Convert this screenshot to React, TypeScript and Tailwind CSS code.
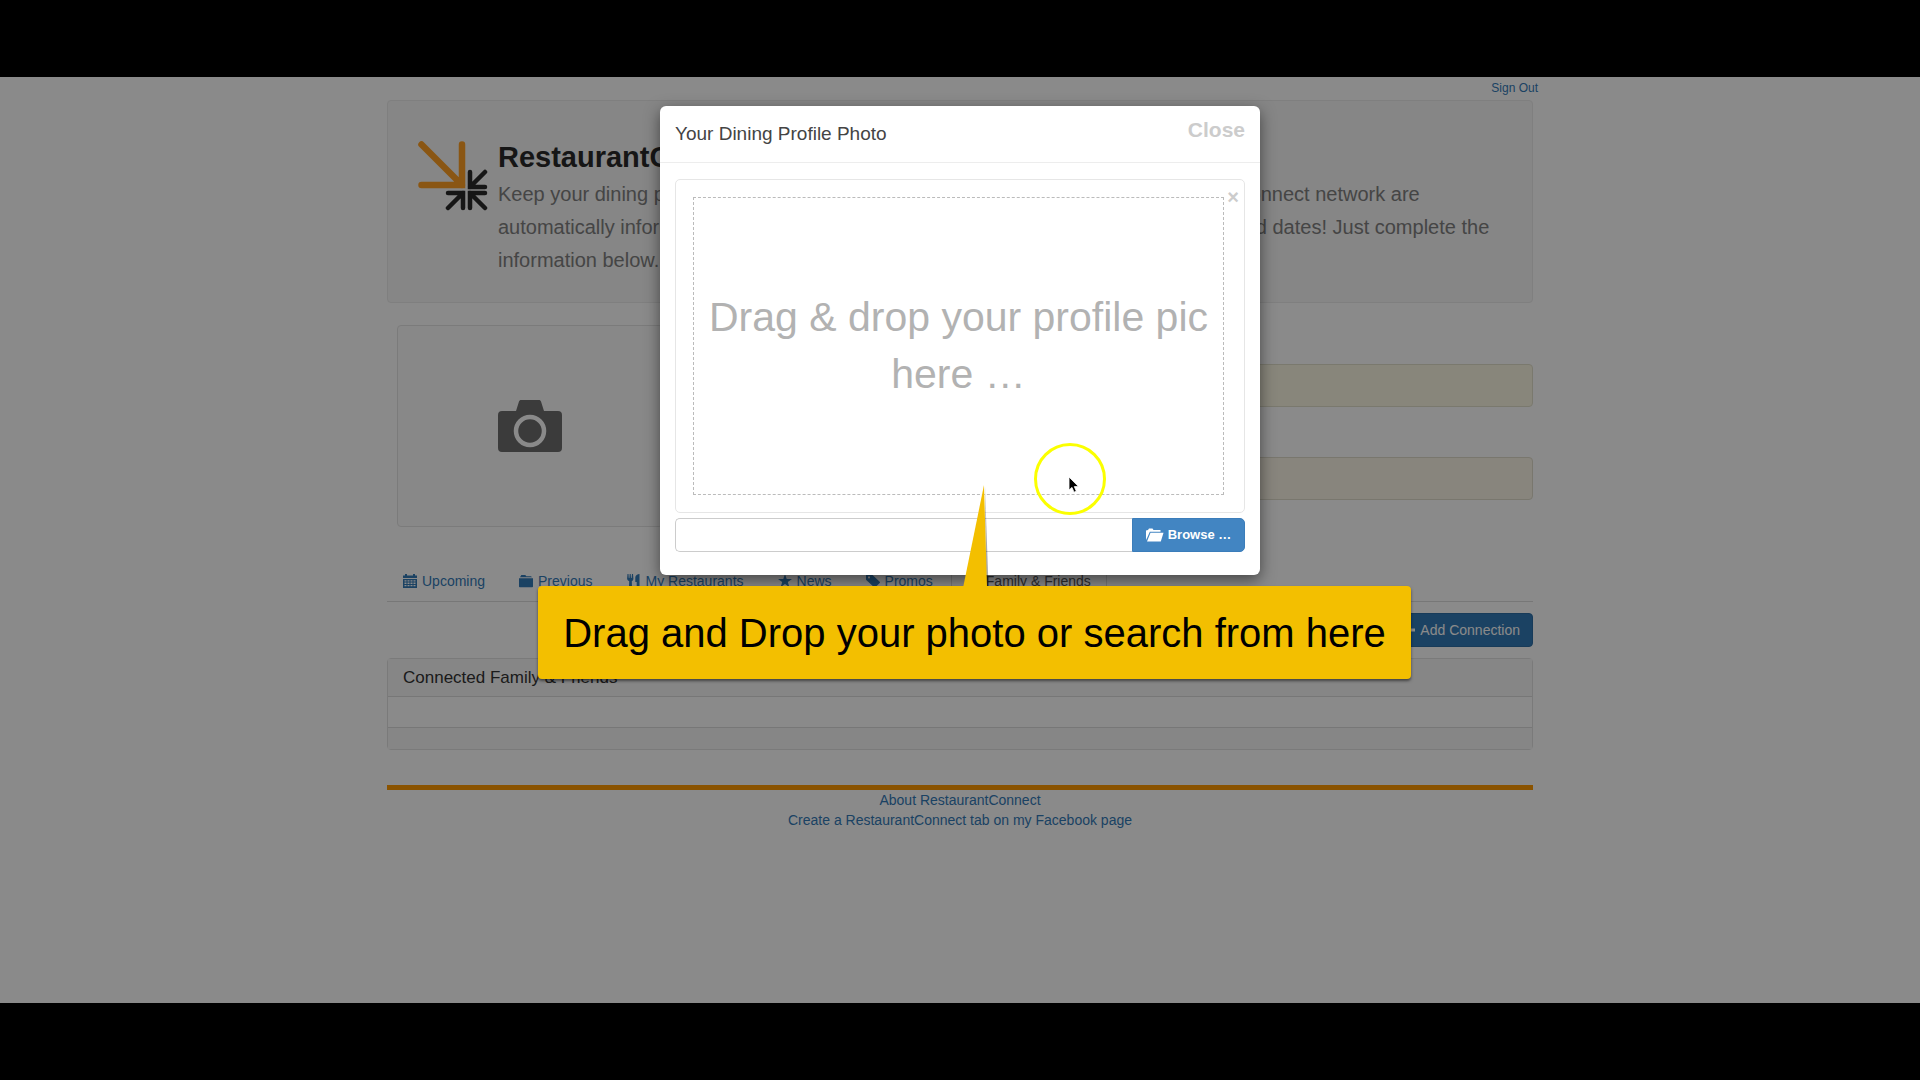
import React from 'react';

type IconProps = { className?: string };

const CalendarIcon = ({ className }: IconProps) => (
  <svg viewBox="0 0 14 14" className={className} fill="currentColor" aria-hidden="true">
    <path d="M0 1.5h2V0h2v1.5h6V0h2v1.5h2V4H0z" />
    <path
      fillRule="evenodd"
      d="M0 5h14v9H0zM1.5 6.2v1.3h2V6.2zm3 0v1.3h2V6.2zm3 0v1.3h2V6.2zm3 0v1.3h2V6.2zM1.500 8.600v1.300h2V8.600zm3 0v1.300h2V8.600zm3 0v1.300h2V8.600zm3 0v1.300h2V8.600zM1.500 11v1.300h2V11zm3 0v1.300h2V11zm3 0v1.300h2V11zm3 0v1.300h2V11z"
    />
  </svg>
);

const FolderIcon = ({ className }: IconProps) => (
  <svg viewBox="0 0 14 14" className={className} fill="currentColor" aria-hidden="true">
    <path d="M1 3.200 2.300 1h4L7.300 2.200H12L13 3.200zM0 4.200h14V12.500a.8.8 0 0 1-.8.8H.8a.8.8 0 0 1-.8-.8z" />
  </svg>
);

const CutleryIcon = ({ className }: IconProps) => (
  <svg viewBox="0 0 14 14" className={className} fill="currentColor" aria-hidden="true">
    <path d="M.5 0h1l.3 4h.6L2.700 0h1L4 4h.600L5 0h1l.4 4.500c0 1.500-.7 2.200-1.600 2.700L5 13c0 1.200-3 1.200-3 0l.2-5.800C1.200 6.700.1 6 .1 4.500z" />
    <path d="M12.500 0v13c0 1.200-2.800 1.200-2.800 0V8H8.300V3.500C8.300 1.500 10.500 0 12.500 0z" />
  </svg>
);

const StarIcon = ({ className }: IconProps) => (
  <svg viewBox="0 0 14 14" className={className} fill="currentColor" aria-hidden="true">
    <path d="m7 0 1.700 4.900H14L9.800 8l1.600 5.200L7 10.100l-4.400 3.100L4.200 8 0 4.900h5.300z" />
  </svg>
);

const TagIcon = ({ className }: IconProps) => (
  <svg viewBox="0 0 14 14" className={className} fill="currentColor" aria-hidden="true">
    <path
      fillRule="evenodd"
      d="M0 1.500A1 1 0 0 1 1 .5h5l7.700 7.200a.9.9 0 0 1 0 1.300L9.400 13.300a.9.9 0 0 1-1.300 0L0 5.800zM3 2.300a1.100 1.100 0 1 0 0 2.200 1.100 1.100 0 0 0 0-2.200z"
    />
  </svg>
);

const UserIcon = ({ className }: IconProps) => (
  <svg viewBox="0 0 14 14" className={className} fill="currentColor" aria-hidden="true">
    <path d="M7 0c2 0 3.200 1.500 3.200 3.500S9 8 8.500 8.300c0 1.200 5 1.700 5 4.700H.5c0-3 5-3.500 5-4.700C5 8 3.800 5.500 3.800 3.500S5 0 7 0z" />
  </svg>
);

const PlusIcon = ({ className }: IconProps) => (
  <svg viewBox="0 0 14 14" className={className} fill="currentColor" aria-hidden="true">
    <path d="M5.500 1h3v4.500H13v3H8.500V13h-3V8.500H1v-3h4.500z" />
  </svg>
);

const FolderOpenIcon = ({ className }: IconProps) => (
  <svg viewBox="0 0 18 14" className={className} fill="currentColor" aria-hidden="true">
    <path d="M0 12V2.500L2 2 3 .5h3.500L7.500 2h7v1.700H3.800L1.500 9z" />
    <path d="M4.500 4.700H17.500L14.800 13.500H1z" />
  </svg>
);

const CameraIcon = ({ className }: IconProps) => (
  <svg viewBox="0 0 64 52" className={className} aria-hidden="true">
    <path
      fill="#6e6e6e"
      d="M4 11h14l3-9.500C21.500.5 22 0 23 0h18c1 0 1.500.5 2 1.500L46 11h14a4 4 0 0 1 4 4v33a4 4 0 0 1-4 4H4a4 4 0 0 1-4-4V15a4 4 0 0 1 4-4z"
    />
    <circle cx="32" cy="31" r="14" fill="#6e6e6e" stroke="#ffffff" strokeWidth="4.500" />
  </svg>
);

const Logo = ({ className }: IconProps) => (
  <svg viewBox="0 0 70 70" className={className} fill="none" strokeLinecap="round" aria-hidden="true">
    <g stroke="#2a2a2a" strokeWidth="4.500">
      <path d="M67 31 52 46M52 31v15h15" />
      <path d="M30 52h15v15M45 52 30 67" />
      <path d="M67 52H52v15M52 52l15 15" />
    </g>
    <path stroke="#ffa023" strokeWidth="6.500" d="M3.500 3.500 44 44M44 3.500V44H3.500" />
  </svg>
);

const tabs = [
  { label: 'Upcoming', Icon: CalendarIcon },
  { label: 'Previous', Icon: FolderIcon },
  { label: 'My Restaurants', Icon: CutleryIcon },
  { label: 'News', Icon: StarIcon },
  { label: 'Promos', Icon: TagIcon },
  { label: 'Family & Friends', Icon: UserIcon, active: true },
];

function AccountPage() {
  return (
    <div className="mx-auto w-full max-w-[1146px] text-sm">
      <div className="flex h-[23px] items-start justify-end pt-[2px]">
        <a href="#signout" className="-mr-[5px] text-xs leading-[18px] text-[#337ab7]">
          Sign Out
        </a>
      </div>

      <header className="flex gap-[10px] rounded-sm border border-[#ebebeb] bg-[#f7f7f7] pt-10 pr-8 pb-[25px] pl-[30px]">
        <Logo className="size-[70px] shrink-0" />
        <div>
          <h1 className="mb-1 text-[29px] leading-[33px] font-bold text-[#2a2a2a]">RestaurantConnect</h1>
          <p className="text-xl leading-[33px] text-[#808080]">
            Keep your dining profile up to date so that the various restaurants in the RestaurantConnect network are
            <br />
            automatically informed of your seating preferences, favorites, birthday, anniversary and dates! Just
            complete the
            <br />
            information below.
          </p>
        </div>
      </header>

      <section className="mt-[22px] flex gap-4 pl-[10px]">
        <button
          type="button"
          aria-label="Change profile photo"
          className="flex h-[202px] w-[266px] items-center justify-center rounded border border-[#e4e4e4] bg-[#fbfbfb]"
        >
          <CameraIcon className="w-16" />
        </button>
        <div className="flex flex-1 flex-col gap-[50px] pt-[39px]">
          <div className="h-[43px] rounded-sm border border-[#e2e0cc] bg-[#fcf8e3]" />
          <div className="h-[43px] rounded-sm border border-[#e0dccc] bg-[#fbf5e8]" />
        </div>
      </section>

      <nav className="mt-[33px] flex items-end gap-[2px] border-b border-[#dddddd]">
        {tabs.map(({ label, Icon, active }) => (
          <a
            key={label}
            href="#tab"
            className={
              active
                ? '-mb-px flex items-center gap-[5px] rounded-t border border-b-white border-[#dddddd] bg-white px-[15px] py-[10px] leading-5 text-[#555]'
                : '-mb-px flex items-center gap-[5px] border border-transparent px-[15px] py-[10px] leading-5 text-[#337ab7]'
            }
          >
            <Icon className="size-[14px]" />
            {label}
          </a>
        ))}
      </nav>

      <div className="mt-[11px] flex justify-end">
        <button
          type="button"
          className="flex h-[34px] items-center gap-1 rounded border border-[#2e6da4] bg-[#337ab7] px-3 font-medium text-white"
        >
          <PlusIcon className="size-[14px]" />
          Add Connection
        </button>
      </div>

      <section className="mt-[11px] rounded-sm border border-[#e2e2e2]">
        <h2 className="bg-[#f7f7f7] px-[15px] pt-[9px] pb-2 text-[17px] leading-5 font-medium text-[#333]">
          Connected Family &amp; Friends
        </h2>
        <div className="h-8 border-y border-[#ddd] bg-white" />
        <div className="h-[21px] bg-[#f7f7f7]" />
      </section>

      <footer className="mt-[35px] flex flex-col items-center border-t-[5px] border-[#ff9900] text-[#337ab7]">
        <a href="#about" className="leading-5">
          About RestaurantConnect
        </a>
        <a href="#facebook" className="leading-5">
          Create a RestaurantConnect tab on my Facebook page
        </a>
      </footer>
    </div>
  );
}

function Callout() {
  return (
    <div className="absolute top-[480px] -left-[122px] w-[873px]">
      <p className="rounded-[4px] bg-[#f3bf00] pt-[2px] text-center text-[40px] leading-[91px] whitespace-nowrap text-black shadow-[0_2px_3px_rgba(0,0,0,0.5)]">
        Drag and Drop your photo or search from here
      </p>
      <svg viewBox="0 0 30 104" className="absolute -top-[102px] left-[424px] h-[104px] w-[30px]" aria-hidden="true">
        <path d="M23 3 26.500 102H24z" fill="#00000055" />
        <path d="M22 1 25 104H1z" fill="#f3bf00" />
      </svg>
    </div>
  );
}

function Pointer() {
  return (
    <div className="absolute top-[337px] left-[374px] size-[72px] rounded-full border-[3px] border-[#fbff00]">
      <svg viewBox="0 0 12 18" className="absolute top-[30px] left-[31px] h-[18px] w-3" aria-hidden="true">
        <path d="M1 1v13l3-2.600 2 4.800 2.300-1-2-4.600h4.200z" fill="#000" stroke="#fff" strokeWidth=".8" />
      </svg>
    </div>
  );
}

function PhotoDialog() {
  return (
    <div
      role="dialog"
      aria-labelledby="photo-title"
      className="absolute top-[29px] left-1/2 w-[600px] -translate-x-1/2 rounded-md bg-white shadow-[0_5px_15px_rgba(0,0,0,0.5)]"
    >
      <div className="flex items-start justify-between border-b border-[#ededed] px-[15px] pt-[13px] pb-4">
        <h2 id="photo-title" className="pt-[3px] text-[19px] leading-6 font-medium text-[#444]">
          Your Dining Profile Photo
        </h2>
        <button type="button" className="text-[21px] leading-[22px] font-bold text-[#ccc]">
          Close
        </button>
      </div>

      <div className="px-[15px] pt-4 pb-[23px]">
        <div className="relative mb-[5px] rounded-[5px] border border-[#e6e6e6] p-[17px] pr-5">
          <button
            type="button"
            aria-label="Remove"
            className="absolute top-[7px] right-[5px] text-xl leading-5 font-bold text-[#ccc]"
          >
            ×
          </button>
          <div className="flex h-[298px] items-center justify-center border border-dashed border-[#bbb] text-center text-[41px] leading-[57px] text-[#b2b2b2]">
            Drag &amp; drop your profile pic here …
          </div>
        </div>
        <div className="flex h-[34px]">
          <input
            type="text"
            readOnly
            aria-label="Selected file"
            className="min-w-0 flex-1 rounded-l-[5px] border border-r-0 border-[#ccc] bg-white px-3"
          />
          <button
            type="button"
            className="flex w-[113px] items-center justify-center gap-1 rounded-r-[5px] border border-[#3b7dba] bg-[#4285c2] text-[13px] font-bold text-white"
          >
            <FolderOpenIcon className="w-[18px]" />
            Browse …
          </button>
        </div>
      </div>

      <Callout />
      <Pointer />
    </div>
  );
}

export default function App() {
  return (
    <div className="flex min-h-screen flex-col bg-black py-[77px] font-['Liberation_Sans',Arial,sans-serif]">
      <main className="relative flex-1 bg-white">
        <AccountPage />
        <div className="absolute inset-0 bg-black/46" />
        <PhotoDialog />
      </main>
    </div>
  );
}
